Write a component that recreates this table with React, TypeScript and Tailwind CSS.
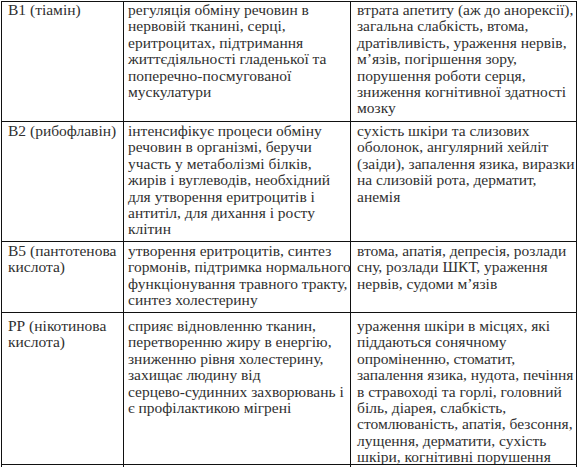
import React from "react";

type Row = {
  pt: string;
  c1: string[];
  c2: string[];
  c3: string[];
};

const rows: Row[] = [
  {
    pt: "pt-0",
    c1: ["В1 (тіамін)"],
    c2: [
      "регуляція обміну речовин в",
      "нервовій тканині, серці,",
      "еритроцитах, підтримання",
      "життєдіяльності гладенької та",
      "поперечно-посмугованої",
      "мускулатури",
    ],
    c3: [
      "втрата апетиту (аж до анорексії),",
      "загальна слабкість, втома,",
      "дратівливість, ураження нервів,",
      "м’язів, погіршення зору,",
      "порушення роботи серця,",
      "зниження когнітивної здатності",
      "мозку",
    ],
  },
  {
    pt: "pt-[1px]",
    c1: ["В2 (рибофлавін)"],
    c2: [
      "інтенсифікує процеси обміну",
      "речовин в організмі, беручи",
      "участь у метаболізмі білків,",
      "жирів і вуглеводів, необхідний",
      "для утворення еритроцитів і",
      "антитіл, для дихання і росту",
      "клітин",
    ],
    c3: [
      "сухість шкіри та слизових",
      "оболонок, ангулярний хейліт",
      "(заіди), запалення язика, виразки",
      "на слизовій рота, дерматит,",
      "анемія",
    ],
  },
  {
    pt: "pt-[1px]",
    c1: ["В5 (пантотенова", "кислота)"],
    c2: [
      "утворення еритроцитів, синтез",
      "гормонів, підтримка нормального",
      "функціонування травного тракту,",
      "синтез холестерину",
    ],
    c3: [
      "втома, апатія, депресія, розлади",
      "сну, розлади ШКТ, ураження",
      "нервів, судоми м’язів",
    ],
  },
  {
    pt: "pt-[5px]",
    c1: ["РР (нікотинова", "кислота)"],
    c2: [
      "сприяє відновленню тканин,",
      "перетворенню жиру в енергію,",
      "зниженню рівня холестерину,",
      "захищає людину від",
      "серцево-судинних захворювань і",
      "є профілактикою мігрені",
    ],
    c3: [
      "ураження шкіри в місцях, які",
      "піддаються сонячному",
      "опроміненню, стоматит,",
      "запалення язика, нудота, печіння",
      "в стравоході та горлі, головний",
      "біль, діарея, слабкість,",
      "стомлюваність, апатія, безсоння,",
      "лущення, дерматити, сухість",
      "шкіри, когнітивні порушення",
    ],
  },
];

function Cell({ lines, pt, pl }: { lines: string[]; pt: string; pl: string }) {
  return (
    <div className={`border-r border-b border-[#111] overflow-hidden ${pt} ${pl}`}>
      {lines.map((l, i) => (
        <div key={i} className="whitespace-nowrap">
          {l}
        </div>
      ))}
    </div>
  );
}

export default function App() {
  return (
    <div className="w-[580px] h-[467px] overflow-hidden bg-white pl-[1px] pt-[1px]">
      <div className="grid grid-cols-[122px_227px_226px] grid-rows-[120px_120px_71px_152px_40px] w-[576px] border-l border-t border-[#111] font-['Liberation_Serif',serif] text-[15.5px] leading-[16.4px] text-[#303030]">
        {rows.map((r, i) => (
          <React.Fragment key={i}>
            <Cell lines={r.c1} pt={r.pt} pl="pl-[6px]" />
            <Cell lines={r.c2} pt={r.pt} pl="pl-[4px]" />
            <Cell lines={r.c3} pt={r.pt} pl="pl-[6px]" />
          </React.Fragment>
        ))}
        <div className="border-r border-b border-[#111]"></div>
        <div className="border-r border-b border-[#111]"></div>
        <div className="border-r border-b border-[#111]"></div>
      </div>
    </div>
  );
}
